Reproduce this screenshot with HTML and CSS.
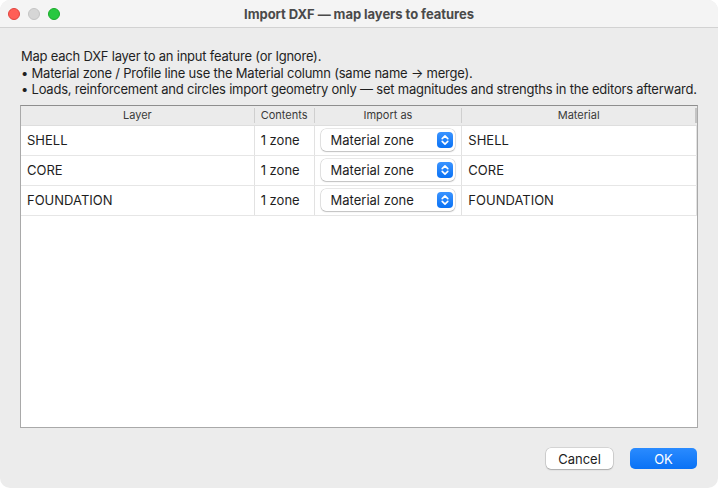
FILE: index.html
```html
<!DOCTYPE html>
<html>
<head>
<meta charset="utf-8">
<link rel="stylesheet" href="styles.css">
</head>
<body>
<div class="window">
  <div class="titlebar">
    <div class="lights">
      <span class="light red"></span>
      <span class="light gray"></span>
      <span class="light green"></span>
    </div>
    <div class="title">Import DXF — map layers to features</div>
  </div>
  <div class="content">
    <div class="intro">
      <div>Map each DXF layer to an input feature (or Ignore).</div>
      <div>• Material zone / Profile line use the Material column (same name → merge).</div>
      <div>• Loads, reinforcement and circles import geometry only — set magnitudes and strengths in the editors afterward.</div>
    </div>
    <div class="table">
      <div class="row head">
        <div class="cell c1">Layer</div>
        <div class="cell c2">Contents</div>
        <div class="cell c3">Import as</div>
        <div class="cell c4">Material</div>
      </div>
      <div class="row">
        <div class="cell c1">SHELL</div>
        <div class="cell c2">1 zone</div>
        <div class="cell c3"><div class="popup"><span>Material zone</span><span class="step"><svg width="16" height="16" viewBox="0 0 16 16"><path d="M5.2 6.6 L8 3.9 L10.8 6.6 M5.2 9.4 L8 12.1 L10.8 9.4" fill="none" stroke="#fff" stroke-width="1.6" stroke-linecap="round" stroke-linejoin="round"/></svg></span></div></div>
        <div class="cell c4">SHELL</div>
      </div>
      <div class="row">
        <div class="cell c1">CORE</div>
        <div class="cell c2">1 zone</div>
        <div class="cell c3"><div class="popup"><span>Material zone</span><span class="step"><svg width="16" height="16" viewBox="0 0 16 16"><path d="M5.2 6.6 L8 3.9 L10.8 6.6 M5.2 9.4 L8 12.1 L10.8 9.4" fill="none" stroke="#fff" stroke-width="1.6" stroke-linecap="round" stroke-linejoin="round"/></svg></span></div></div>
        <div class="cell c4">CORE</div>
      </div>
      <div class="row">
        <div class="cell c1">FOUNDATION</div>
        <div class="cell c2">1 zone</div>
        <div class="cell c3"><div class="popup"><span>Material zone</span><span class="step"><svg width="16" height="16" viewBox="0 0 16 16"><path d="M5.2 6.6 L8 3.9 L10.8 6.6 M5.2 9.4 L8 12.1 L10.8 9.4" fill="none" stroke="#fff" stroke-width="1.6" stroke-linecap="round" stroke-linejoin="round"/></svg></span></div></div>
        <div class="cell c4">FOUNDATION</div>
      </div>
    </div>
    <div class="buttons">
      <button class="btn cancel">Cancel</button>
      <button class="btn ok">OK</button>
    </div>
  </div>
</div>
</body>
</html>
```
FILE: styles.css
```css
html, body {
  margin: 0;
  padding: 0;
  background: #ffffff;
}
body {
  font-family: "Inter", "Liberation Sans", sans-serif;
  font-size: 13px;
  color: #1d1d1d;
}
.window {
  width: 718px;
  height: 488px;
  background: #ececec;
  border-radius: 10px;
  overflow: hidden;
  display: flex;
  flex-direction: column;
}
.titlebar {
  height: 28px;
  flex: none;
  background: #f4f4f4;
  border-bottom: 1px solid #d2d2d2;
  box-sizing: border-box;
  position: relative;
  display: flex;
  align-items: center;
  justify-content: center;
}
.lights {
  position: absolute;
  left: 8px;
  top: 8px;
  display: flex;
  gap: 8px;
}
.light {
  width: 12px;
  height: 12px;
  border-radius: 50%;
  box-sizing: border-box;
}
.red { background: #ff5f57; border: 0.5px solid #e0443e; }
.gray { background: #d6d6d6; border: 0.5px solid #c4c4c4; }
.green { background: #28c840; border: 0.5px solid #1aab29; }
.title {
  font-weight: 700;
  font-size: 13px;
  color: #4a4a4a;
  letter-spacing: -0.05px;
}
.content {
  flex: 1;
  display: flex;
  flex-direction: column;
  padding: 20px 20px 19px 20px;
}
.intro {
  padding-left: 1px;
  line-height: 16.5px;
  color: #1f1f1f;
  letter-spacing: -0.22px;
  white-space: nowrap;
}
.table {
  margin-top: 7px;
  height: 323px;
  background: #fff;
  border: 1px solid #a9a9a9;
  border-top-color: #8e8e8e;
  box-sizing: border-box;
  display: flex;
  flex-direction: column;
}
.row {
  display: flex;
  height: 30px;
  border-bottom: 1px solid #e6e6e6;
  box-sizing: border-box;
}
.row.head {
  height: 20px;
  background: #ebebeb;
  border-bottom: 1px solid #dedede;
}
.cell {
  box-sizing: border-box;
  border-right: 1px solid #e2e2e2;
  padding-left: 6px;
  display: flex;
  align-items: center;
  white-space: nowrap;
}
.head .cell {
  justify-content: center;
  padding-left: 0;
  font-size: 11px;
  color: #3a3a3a;
  border-right: 1px solid #cfcfcf;
  margin: 2px 0;
}
.c1 { width: 234px; }
.c2 { width: 60px; }
.c3 { width: 148px; }
.c4 { width: 235px; }
.head .c4 { border-right: 2px solid #c4c4c4; }
.c3 { padding-left: 6px; }
.popup {
  width: 134px;
  height: 22px;
  box-sizing: border-box;
  background: #fff;
  border-radius: 5px;
  box-shadow: 0 0 0 0.5px rgba(0,0,0,0.18), 0 1px 1.5px rgba(0,0,0,0.18);
  display: flex;
  align-items: center;
  justify-content: space-between;
  padding: 0 2px 0 10px;
  color: #1d1d1d;
}
.step {
  width: 16px;
  height: 16px;
  border-radius: 4px;
  background: linear-gradient(#3b94ff, #0a72f5);
  display: flex;
}
.buttons {
  margin-top: auto;
  display: flex;
  justify-content: flex-end;
  gap: 17px;
  padding-right: 1px;
}
.btn {
  font-family: inherit;
  font-size: 13px;
  height: 21px;
  width: 67px;
  border: none;
  border-radius: 5px;
  padding: 0;
}
.cancel {
  background: #fff;
  color: #1d1d1d;
  box-shadow: 0 0 0 0.5px rgba(0,0,0,0.2), 0 1px 1.5px rgba(0,0,0,0.2);
}
.ok {
  background: linear-gradient(#2a8bff, #0a72f5);
  color: #fff;
}
```
